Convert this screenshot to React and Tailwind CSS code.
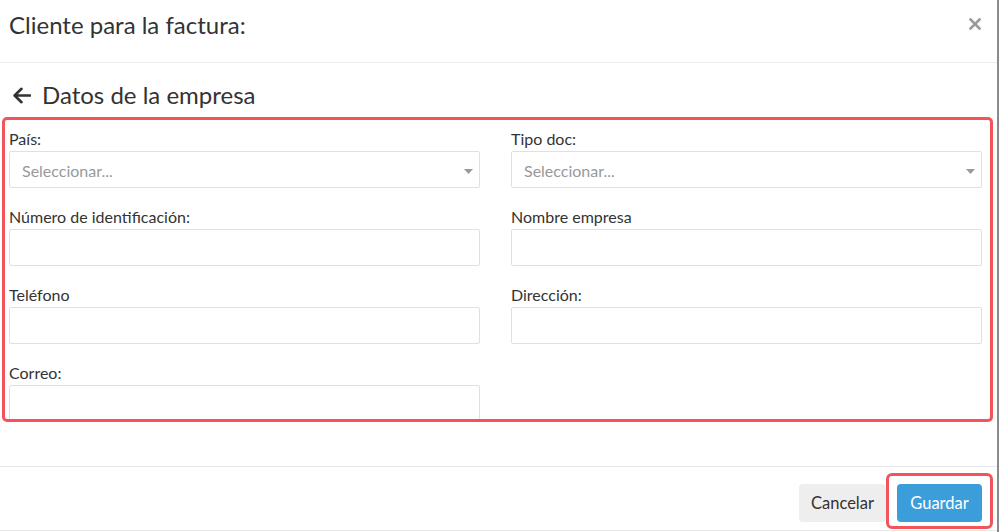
import React from "react";

function Label({ children }) {
  return <div className="h-[20px] leading-[20px] text-[16px] text-[#333] mb-[2px]">{children}</div>;
}

function Select() {
  return (
    <div className="relative h-[37px] border border-[#dde0e4] rounded-[2px] bg-white flex items-center pl-[12px] pt-[2px]">
      <span className="text-[16px] text-[#999]">Seleccionar...</span>
      <svg className="absolute right-[6px] top-[17px]" width="9" height="5" viewBox="0 0 9 5">
        <path d="M0 0 L9 0 L4.5 5 Z" fill="#999" />
      </svg>
    </div>
  );
}

function Input() {
  return <div className="h-[37px] border border-[#dde0e4] rounded-[2px] bg-white" />;
}

function Field({ label, children }) {
  return (
    <div className="mb-[19px]">
      <Label>{label}</Label>
      {children}
    </div>
  );
}

export default function App() {
  return (
    <div className="w-[1000px] h-[532px] bg-white flex overflow-hidden" style={{ fontFamily: "Lato, 'Open Sans', sans-serif" }}>
      <div className="w-[999px] h-[532px] flex flex-col border-r-[2px] border-[#8a8a8a]">
        {/* Header */}
        <div className="h-[63px] shrink-0 border-b border-[#ececec] flex items-start justify-between pl-[9px] pr-[16px] pt-[9px]">
          <div className="text-[24px] leading-[32px] text-[#333]">Cliente para la factura:</div>
          <svg className="mt-[9px]" width="12" height="12" viewBox="0 0 12 12">
            <path d="M1.5 1.5 L10.5 10.5 M10.5 1.5 L1.5 10.5" stroke="#9a9a9a" strokeWidth="2.6" strokeLinecap="square" />
          </svg>
        </div>

        {/* Body */}
        <div className="h-[403px] shrink-0 pt-[16px] pl-[2px] pr-[4px]">
          <div className="flex items-center h-[32px] pl-[10px] gap-[11px]">
            <svg width="19" height="17" viewBox="0 0 19 17">
              <path d="M18 8.5 H3 M9.5 1.8 L2.6 8.5 L9.5 15.2" fill="none" stroke="#333" strokeWidth="2.6" strokeLinecap="round" strokeLinejoin="round" />
            </svg>
            <span className="text-[24px] leading-[32px] text-[#333]">Datos de la empresa</span>
          </div>
          <div className="mt-[6px] h-[305px] border-[3px] border-[#f2545b] rounded-[5px] overflow-hidden pt-[9px] pl-[4px] pr-[8px]">
            <div className="grid grid-cols-2 gap-x-[31px]">
              <Field label="País:"><Select /></Field>
              <Field label="Tipo doc:"><Select /></Field>
              <Field label="Número de identificación:"><Input /></Field>
              <Field label="Nombre empresa"><Input /></Field>
              <Field label="Teléfono"><Input /></Field>
              <Field label="Dirección:"><Input /></Field>
              <Field label="Correo:"><Input /></Field>
            </div>
          </div>
        </div>

        {/* Footer */}
        <div className="h-[65px] shrink-0 border-t border-b border-[#e8e8e8] bg-white flex items-start justify-end pr-[4px] pt-[6px]">
          <button className="mt-[11px] h-[38px] w-[87px] rounded-[4px] bg-[#eeeeee] text-[16.5px] text-[#333]">
            Cancelar
          </button>
          <div className="h-[56px] border-[3px] border-[#f2545b] rounded-[6px] px-[8px] pt-[8px]">
            <button className="h-[38px] w-[85px] rounded-[4px] bg-[#3b9edb] text-[16.5px] text-white">
              Guardar
            </button>
          </div>
        </div>
      </div>
    </div>
  );
}
